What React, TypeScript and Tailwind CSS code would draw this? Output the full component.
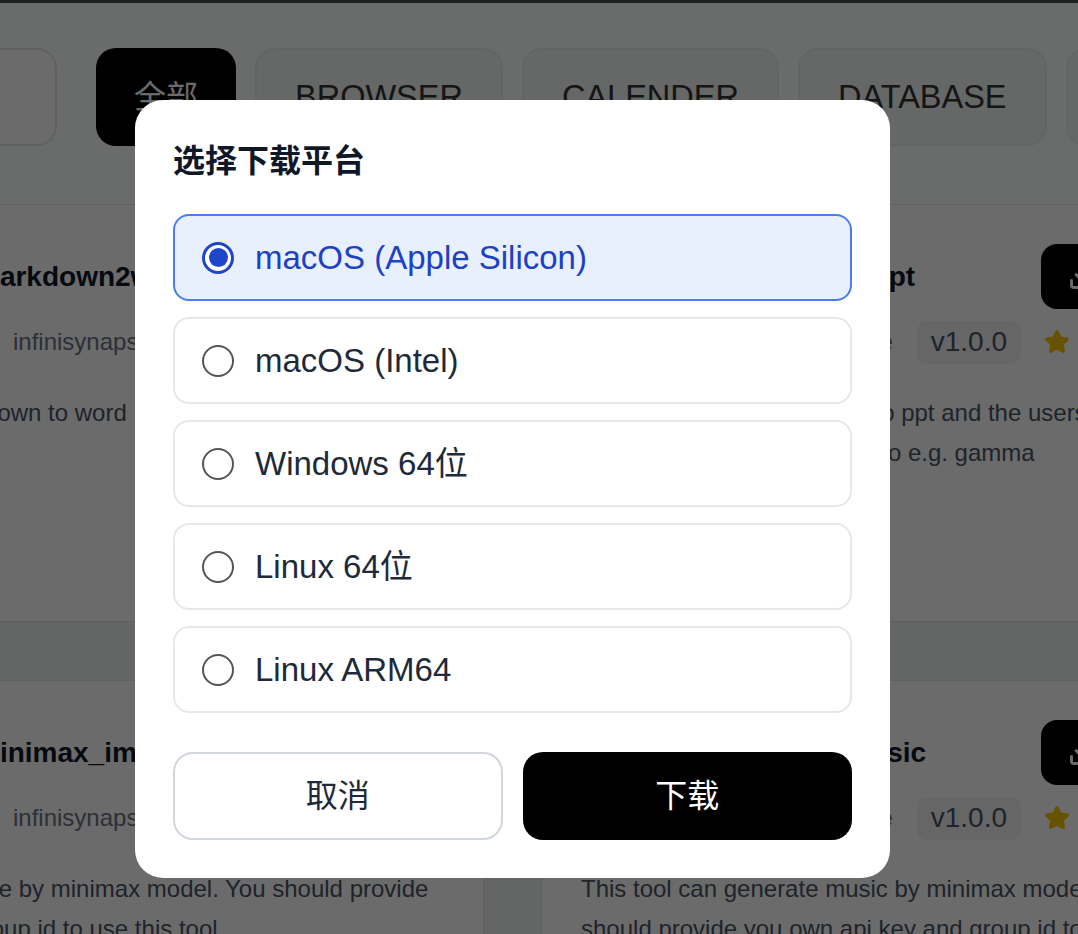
import { Download, Star, User, Search, FileText } from "lucide-react";

type CardProps = { title: string; desc: string };

function ToolCard({ title, desc }: CardProps) {
  return (
    <div className="h-[418px] rounded-[24px] border border-gray-200 bg-white p-[39px]">
      <div className="flex gap-[23px]">
        <div className="flex h-[112px] w-[112px] shrink-0 items-center justify-center rounded-[20px] bg-gray-100">
          <FileText size={48} className="text-gray-500" />
        </div>
        <div className="min-w-0 flex-1">
          <div className="flex h-[65px] items-center justify-between gap-4">
            <h3 className="truncate text-[28px] font-bold text-gray-900">{title}</h3>
            <button className="flex h-[65px] shrink-0 items-center gap-[10px] rounded-[16px] bg-black px-[27px] text-[26px] text-white">
              <Download size={28} strokeWidth={2.5} />
              安装
            </button>
          </div>
          <div className="mt-[11px] flex h-[44px] items-center">
            <User size={24} className="mr-[14px] text-gray-500" />
            <span className="text-[24px] text-gray-500">infinisynapse</span>
            <span className="ml-[24px] flex h-[43px] items-center rounded-[10px] bg-gray-100 px-[14px] text-[28px] text-gray-600">
              v1.0.0
            </span>
            <Star size={26} className="ml-[23px] fill-[#f5c400] text-[#f5c400]" />
            <span className="ml-[8px] text-[24px] text-gray-500">12</span>
          </div>
        </div>
      </div>
      <p className="mt-[29px] text-[24px] leading-[40px] text-gray-600">{desc}</p>
    </div>
  );
}

const platforms = [
  "macOS (Apple Silicon)",
  "macOS (Intel)",
  "Windows 64位",
  "Linux 64位",
  "Linux ARM64",
];

export default function App() {
  const selected = 0;
  return (
    <div className="relative h-[934px] w-full overflow-hidden bg-[#eef3f3] font-['Liberation_Sans','Noto_Sans_CJK_SC',sans-serif]">
      <div className="h-[3px] bg-[#4a4c50]" />
      <header className="h-[201px] bg-[#fcfefe] pt-[45px]">
        <div className="flex gap-[19px] whitespace-nowrap">
          <div className="-ml-[243px] mr-[20px] flex h-[98px] w-[300px] shrink-0 items-center rounded-[20px] border-2 border-gray-200 bg-white px-6">
            <Search size={30} className="text-gray-400" />
          </div>
          <button className="flex h-[98px] shrink-0 items-center rounded-[20px] bg-black px-[38px] text-[32px] text-white">
            全部
          </button>
          {["BROWSER", "CALENDER", "DATABASE", "DOCUMENT"].map((t) => (
            <button
              key={t}
              className="flex h-[98px] shrink-0 items-center rounded-[20px] border-2 border-[#eceeee] bg-[#f3f5f5] px-[38px] text-[32.5px] text-[#333]"
            >
              {t}
            </button>
          ))}
        </div>
      </header>
      <div className="-ml-[200px] grid w-[1425px] grid-cols-[684px_684px] gap-x-[57px] gap-y-[58px]">
        <ToolCard title="markdown2word" desc="Convert markdown to word" />
        <ToolCard
          title="markdown2ppt"
          desc="Convert markdown content to ppt and the users can download the ppt and use it to e.g. gamma"
        />
        <ToolCard
          title="minimax_image"
          desc="Generate image by minimax model. You should provide api key and group id to use this tool."
        />
        <ToolCard
          title="minimax_music"
          desc="This tool can generate music by minimax model. You should provide you own api key and group id to use this tool."
        />
      </div>

      <div className="absolute inset-0 bg-black/[0.58]" />

      <div className="absolute left-[135px] top-[100px] w-[755px] rounded-[28px] bg-white p-[38px]">
        <h2 className="text-[32px] font-bold leading-[46px] text-gray-900">选择下载平台</h2>
        <div className="mt-[30px] flex flex-col gap-[16px]">
          {platforms.map((p, i) => {
            const on = i === selected;
            return (
              <label
                key={p}
                className={
                  on
                    ? "flex h-[87px] items-center gap-[21px] rounded-[16px] border-2 border-[#4b7cf0] bg-[#e8f0fd] pl-[27px]"
                    : "flex h-[87px] items-center gap-[21px] rounded-[16px] border-2 border-gray-200 bg-white pl-[27px]"
                }
              >
                {on ? (
                  <span className="flex h-[32px] w-[32px] items-center justify-center rounded-full border-[3px] border-[#1f45c8] bg-white">
                    <span className="h-[19px] w-[19px] rounded-full bg-[#1f45c8]" />
                  </span>
                ) : (
                  <span className="h-[32px] w-[32px] rounded-full border-2 border-[#555] bg-white" />
                )}
                <span className={on ? "text-[33px] text-[#1d40c4]" : "text-[33px] text-gray-800"}>{p}</span>
              </label>
            );
          })}
        </div>
        <div className="mt-[39px] grid grid-cols-2 gap-[20px]">
          <button className="h-[88px] rounded-[20px] border-2 border-gray-300 bg-white text-[32px] text-gray-800">
            取消
          </button>
          <button className="h-[88px] rounded-[20px] bg-black text-[32px] text-white">下载</button>
        </div>
      </div>
    </div>
  );
}
